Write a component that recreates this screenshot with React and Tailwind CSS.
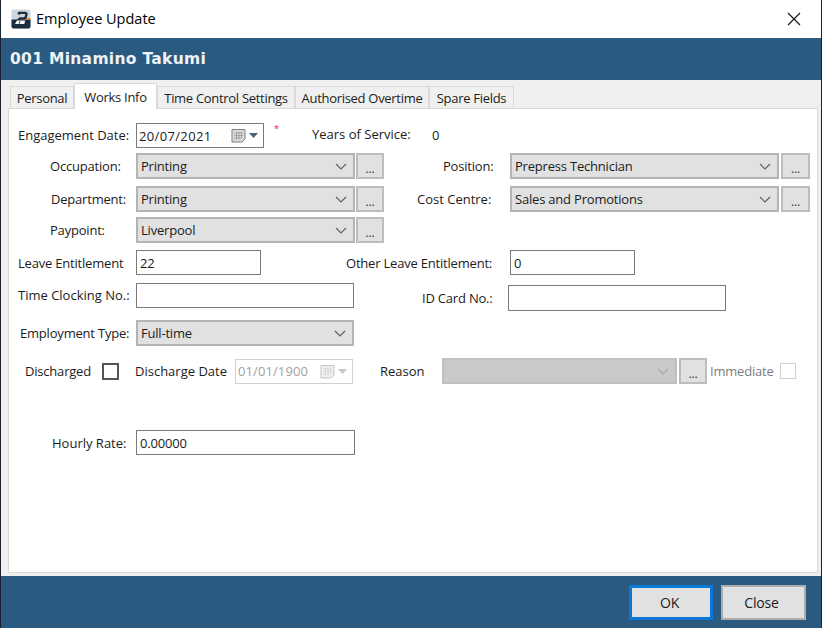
function Chevron({ className = 'text-[#606060]' }) {
    return (
        <svg width="12" height="7" viewBox="0 0 12 7" fill="none" className={className}>
            <path d="M1 1l5 5 5-5" stroke="currentColor" strokeWidth="1.2" />
        </svg>
    );
}

function CalendarIcon({ muted }) {
    const line = muted ? '#c4c4c4' : '#7d7d7d';
    return (
        <span className="flex items-center gap-[2px]">
            <svg width="16" height="15" viewBox="0 0 16 15" fill="none">
                <path d="M1 1.5h13v9.5l-3 3H1z" fill={muted ? '#f0f0f0' : '#dcdcdc'} stroke={line} />
                <path d="M3 5h9M3 7.5h9M3 10h7M5.5 3.5v8M8 3.5v8M10.5 3.5v7" stroke={muted ? '#d4d4d4' : '#9a9a9a'} strokeWidth="0.8" />
            </svg>
            <svg width="9" height="5" viewBox="0 0 9 5">
                <path d="M0 0h9L4.5 5z" fill={muted ? '#c8c8c8' : '#4f5f75'} />
            </svg>
        </span>
    );
}

function Logo() {
    return (
        <svg width="20" height="20" viewBox="0 0 20 20">
            <rect x="0.5" y="0.5" width="19" height="19" rx="2" fill="#cfd5da" />
            <path d="M0.5 10.5h19v7a2 2 0 0 1-2 2h-15a2 2 0 0 1-2-2z" fill="#1c2f42" />
            <path d="M12 9h7.5v1.5H11z" fill="#e8892b" />
            <path d="M7.5 5.5l.6-1.6h6.4l1 1-.7 3.2-1.6 1.4H9L5.6 12.6h7.2" fill="none" stroke="#1c2f42" strokeWidth="2.4" />
            <path d="M6 11.5h8.2l-.9 3.6H4z" fill="#fff" />
            <path d="M8 15.1l1.2-3.6" stroke="#1c2f42" strokeWidth="0.8" />
        </svg>
    );
}

function Label({ children, className = '' }) {
    return <span className={`shrink-0 whitespace-nowrap ${className}`}>{children}</span>;
}

function Combo({ value, className = '', disabled }) {
    return (
        <div className={`flex h-[26px] items-center justify-between border-2 pl-[3px] pr-[6px] ${disabled ? 'border-[#c0c0c0] bg-[#c9c9c9]' : 'border-[#b4b4b4] bg-[#e1e1e1]'} ${className}`}>
            <span>{value}</span>
            <Chevron className={disabled ? 'text-[#a8a8a8]' : 'text-[#606060]'} />
        </div>
    );
}

function Dots({ className = '' }) {
    return (
        <button className={`flex h-[26px] shrink-0 items-end justify-center border-2 border-[#bdbdbd] bg-[#e1e1e1] pb-[1px] text-[12px] leading-[14px] text-[#333] ${className}`}>
            ...
        </button>
    );
}

function TextBox({ value, className = '' }) {
    return (
        <div className={`flex h-[25px] items-center border border-[#7a7a7a] bg-white px-[3px] ${className}`}>{value}</div>
    );
}

function Tab({ children, active, className = '' }) {
    return (
        <div className={`flex items-center justify-center border border-[#d9d9d9] tracking-[-0.3px] ${active ? 'z-10 -mb-px h-[26px] border-b-0 bg-white' : 'h-[22px] border-b-0 bg-[#f0f0f0]'} ${className}`}>
            {children}
        </div>
    );
}

export default function App() {
    return (
        <div className="flex h-[628px] w-[822px] overflow-hidden bg-[#17222e] pl-px font-['Open_Sans',sans-serif] text-[13px] leading-[20px] tracking-[-0.2px] text-[#1c1c1c]">
            <div className="flex w-[820px] flex-col">
                {/* Title bar */}
                <div className="flex h-[38px] shrink-0 items-center justify-between bg-white pl-[10px] pr-[20px]">
                    <div className="flex items-center gap-[5px]">
                        <Logo />
                        <span className="text-[14.5px] tracking-normal text-black">Employee Update</span>
                    </div>
                    <svg width="14" height="14" viewBox="0 0 14 14" fill="none">
                        <path d="M1 1l12 12M13 1L1 13" stroke="#111" strokeWidth="1.1" />
                    </svg>
                </div>

                {/* Employee header */}
                <div className="flex h-[42px] shrink-0 items-center bg-[#2a5a80] pl-[9px] font-['DejaVu_Sans',sans-serif] text-[15.5px] font-bold tracking-[0.3px] text-[#eef3f7]">
                    001 Minamino Takumi
                </div>

                {/* Tabs and page */}
                <div className="flex min-h-0 flex-1 flex-col bg-[#f0f0f0] pl-[7px] pr-[3px] pt-[3px]">
                    <div className="ml-[2px] flex h-[25px] shrink-0 items-end">
                        <Tab className="w-[64px]">Personal</Tab>
                        <Tab active className="w-[83px]">Works Info</Tab>
                        <Tab className="w-[138px]">Time Control Settings</Tab>
                        <Tab className="w-[134px]">Authorised Overtime</Tab>
                        <Tab className="w-[85px]">Spare Fields</Tab>
                    </div>

                    <div className="flex h-[465px] shrink-0 flex-col border border-[#d9d9d9] bg-white">
                        {/* Engagement */}
                        <div className="mt-[14px] flex h-[25px] items-center">
                            <Label className="-mt-px w-[127px] pl-[9px] tracking-normal">Engagement Date:</Label>
                            <div className="flex h-[25px] w-[128px] items-center justify-between border border-[#7a7a7a] pl-[2px] pr-[5px]">
                                <span className="tracking-[0.35px]">20/07/2021</span>
                                <CalendarIcon />
                            </div>
                            <span className="ml-[10px] -mt-[14px] w-[38px] text-[9px] leading-[10px] text-[#e0202a]">*</span>
                            <Label className="-mt-[3px] w-[120px] tracking-normal">Years of Service:</Label>
                            <span className="-mt-[2px]">0</span>
                        </div>

                        {/* Occupation / Position */}
                        <div className="mt-[5px] flex h-[26px] items-center">
                            <Label className="w-[127px] pl-[41px]">Occupation:</Label>
                            <Combo value="Printing" className="w-[219px]" />
                            <Dots className="ml-px w-[28px]" />
                            <Label className="w-[126px] pl-[59px]">Position:</Label>
                            <Combo value="Prepress Technician" className="w-[269px]" />
                            <Dots className="ml-[2px] w-[29px]" />
                        </div>

                        {/* Department / Cost Centre */}
                        <div className="mt-[7px] flex h-[26px] items-center">
                            <Label className="w-[127px] pl-[42px]">Department:</Label>
                            <Combo value="Printing" className="w-[219px]" />
                            <Dots className="ml-px w-[28px]" />
                            <Label className="w-[126px] pl-[33px] tracking-normal">Cost Centre:</Label>
                            <Combo value="Sales and Promotions" className="w-[269px]" />
                            <Dots className="ml-[2px] w-[29px]" />
                        </div>

                        {/* Paypoint */}
                        <div className="mt-[5px] flex h-[26px] items-center">
                            <Label className="w-[127px] pl-[41px]">Paypoint:</Label>
                            <Combo value="Liverpool" className="w-[219px]" />
                            <Dots className="ml-px w-[28px]" />
                        </div>

                        {/* Leave */}
                        <div className="mt-[7px] flex h-[25px] items-center">
                            <Label className="w-[127px] pl-[9px]">Leave Entitlement</Label>
                            <TextBox value="22" className="w-[125px]" />
                            <Label className="ml-[85px] w-[164px]">Other Leave Entitlement:</Label>
                            <TextBox value="0" className="w-[125px]" />
                        </div>

                        {/* Clocking / ID */}
                        <div className="mt-[8px] flex h-[28px] items-start">
                            <Label className="w-[127px] pl-[9px] leading-[25px] tracking-normal">Time Clocking No.:</Label>
                            <TextBox className="w-[218px]" />
                            <Label className="ml-[68px] mt-[3px] w-[86px] leading-[25px]">ID Card No.:</Label>
                            <TextBox className="mt-[2px] h-[26px] w-[218px]" />
                        </div>

                        {/* Employment type */}
                        <div className="mt-[9px] flex h-[26px] items-center">
                            <Label className="w-[127px] pl-[11px]">Employment Type:</Label>
                            <Combo value="Full-time" className="w-[218px]" />
                        </div>

                        {/* Discharge */}
                        <div className="mt-[12px] flex h-[26px] items-center">
                            <Label className="w-[93px] pl-[16px]">Discharged</Label>
                            <span className="h-[17px] w-[17px] shrink-0 border-2 border-[#555]" />
                            <Label className="ml-[16px] w-[100px] tracking-normal">Discharge Date</Label>
                            <div className="flex h-[25px] w-[118px] items-center justify-between border border-[#d0d0d0] pl-[2px] pr-[5px] text-[#a0a0a0]">
                                <span className="tracking-[0.1px]">01/01/1900</span>
                                <CalendarIcon muted />
                            </div>
                            <Label className="ml-[27px] w-[62px] tracking-normal">Reason</Label>
                            <Combo disabled className="w-[235px]" />
                            <Dots className="ml-[2px] w-[28px]" />
                            <Label className="ml-[3px] w-[70px] text-[#7d7d7d]">Immediate</Label>
                            <span className="h-[16px] w-[16px] shrink-0 border border-[#cfcfcf]" />
                        </div>

                        {/* Hourly rate */}
                        <div className="mt-[46px] flex h-[25px] items-center">
                            <Label className="w-[127px] pl-[43px] tracking-normal">Hourly Rate:</Label>
                            <TextBox value="0.00000" className="w-[219px]" />
                        </div>
                    </div>
                </div>

                {/* Footer */}
                <div className="flex h-[52px] shrink-0 items-start justify-end gap-[8px] bg-[#2a5a80] pr-[15px] pt-[9px] text-[14px]">
                    <button className="h-[35px] w-[84px] border-[3px] border-[#0a78d6] bg-[#e1e1e1] pr-[3px]">OK</button>
                    <button className="h-[35px] w-[85px] border-2 border-[#adadad] bg-[#e1e1e1] pr-[4px]">Close</button>
                </div>
            </div>
        </div>
    );
}
